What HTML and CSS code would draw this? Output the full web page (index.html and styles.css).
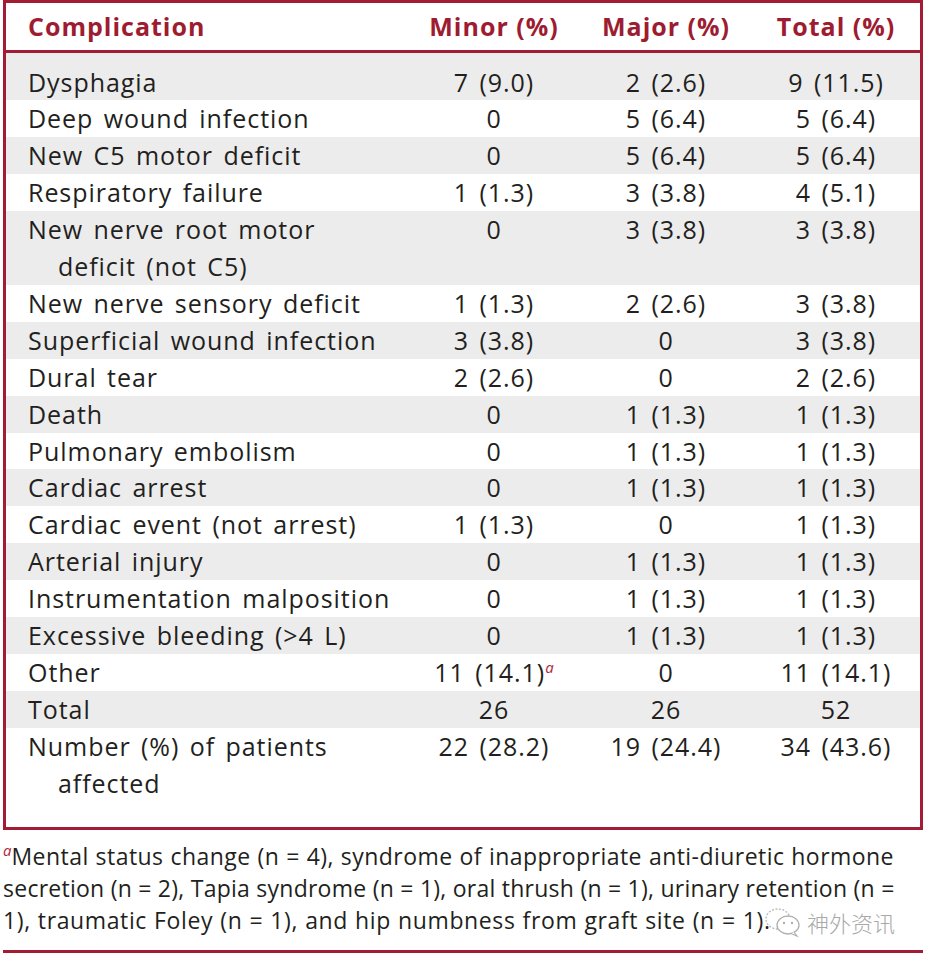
FILE: index.html
```html
<!DOCTYPE html>
<html>
<head>
<meta charset="utf-8">
<link rel="stylesheet" href="styles.css">
</head>
<body>
<div class="page">
  <div class="box">
    <div class="row head">
      <div class="c1">Complication</div>
      <div class="cn">Minor (%)</div>
      <div class="cn">Major (%)</div>
      <div class="cn">Total (%)</div>
    </div>
    <div class="body">
      <div class="row g first"><div class="c1">Dysphagia</div><div class="cn">7 (9.0)</div><div class="cn">2 (2.6)</div><div class="cn">9 (11.5)</div></div>
      <div class="row"><div class="c1">Deep wound infection</div><div class="cn">0</div><div class="cn">5 (6.4)</div><div class="cn">5 (6.4)</div></div>
      <div class="row g"><div class="c1">New C5 motor deficit</div><div class="cn">0</div><div class="cn">5 (6.4)</div><div class="cn">5 (6.4)</div></div>
      <div class="row"><div class="c1">Respiratory failure</div><div class="cn">1 (1.3)</div><div class="cn">3 (3.8)</div><div class="cn">4 (5.1)</div></div>
      <div class="row g"><div class="c1 hang">New nerve root motor<br>deficit (not C5)</div><div class="cn">0</div><div class="cn">3 (3.8)</div><div class="cn">3 (3.8)</div></div>
      <div class="row"><div class="c1">New nerve sensory deficit</div><div class="cn">1 (1.3)</div><div class="cn">2 (2.6)</div><div class="cn">3 (3.8)</div></div>
      <div class="row g"><div class="c1">Superficial wound infection</div><div class="cn">3 (3.8)</div><div class="cn">0</div><div class="cn">3 (3.8)</div></div>
      <div class="row"><div class="c1">Dural tear</div><div class="cn">2 (2.6)</div><div class="cn">0</div><div class="cn">2 (2.6)</div></div>
      <div class="row g"><div class="c1">Death</div><div class="cn">0</div><div class="cn">1 (1.3)</div><div class="cn">1 (1.3)</div></div>
      <div class="row"><div class="c1">Pulmonary embolism</div><div class="cn">0</div><div class="cn">1 (1.3)</div><div class="cn">1 (1.3)</div></div>
      <div class="row g"><div class="c1">Cardiac arrest</div><div class="cn">0</div><div class="cn">1 (1.3)</div><div class="cn">1 (1.3)</div></div>
      <div class="row"><div class="c1">Cardiac event (not arrest)</div><div class="cn">1 (1.3)</div><div class="cn">0</div><div class="cn">1 (1.3)</div></div>
      <div class="row g"><div class="c1">Arterial injury</div><div class="cn">0</div><div class="cn">1 (1.3)</div><div class="cn">1 (1.3)</div></div>
      <div class="row"><div class="c1">Instrumentation malposition</div><div class="cn">0</div><div class="cn">1 (1.3)</div><div class="cn">1 (1.3)</div></div>
      <div class="row g"><div class="c1">Excessive bleeding (&gt;4 L)</div><div class="cn">0</div><div class="cn">1 (1.3)</div><div class="cn">1 (1.3)</div></div>
      <div class="row"><div class="c1">Other</div><div class="cn">11 (14.1)<sup class="fa">a</sup></div><div class="cn">0</div><div class="cn">11 (14.1)</div></div>
      <div class="row g"><div class="c1">Total</div><div class="cn">26</div><div class="cn">26</div><div class="cn">52</div></div>
      <div class="row"><div class="c1 hang">Number (%) of patients<br>affected</div><div class="cn">22 (28.2)</div><div class="cn">19 (24.4)</div><div class="cn">34 (43.6)</div></div>
    </div>
  </div>
  <div class="foot">
    <span class="fl l1"><sup class="fa">a</sup>Mental status change (n = 4), syndrome of inappropriate anti-diuretic hormone</span>
    <span class="fl l2">secretion (n = 2), Tapia syndrome (n = 1), oral thrush (n = 1), urinary retention (n =</span>
    <span class="fl l3">1), traumatic Foley (n = 1), and hip numbness from graft site (n = 1).</span>
    <div class="wm">
      <svg class="wm-logo" width="40" height="32" viewBox="0 0 40 32">
        <ellipse cx="15" cy="13" rx="12" ry="10" fill="none" stroke="#b8b8b8" stroke-width="1.3" stroke-dasharray="2 1.5"/>
        <ellipse cx="25" cy="19" rx="11" ry="9" fill="#fff" stroke="#b0b0b0" stroke-width="1.3"/>
        <path d="M31 26 L34 30 L28 27.5" fill="#fff" stroke="#b0b0b0" stroke-width="1.2"/>
        <circle cx="21" cy="17" r="1.2" fill="#b0b0b0"/>
        <circle cx="29" cy="17" r="1.2" fill="#b0b0b0"/>
      </svg>
      <span class="wm-text">神外资讯</span>
    </div>
  </div>
  <div class="rule"></div>
</div>
</body>
</html>
```

FILE: styles.css
```css
html, body {
  margin: 0;
  padding: 0;
  background: #ffffff;
}
.page {
  width: 927px;
  padding-left: 3px;
  box-sizing: border-box;
  font-family: "Open Sans", "Noto Sans", sans-serif;
  color: #231f20;
}
.box {
  width: 920px;
  height: 830px;
  box-sizing: border-box;
  border: 3px solid #a21d33;
}
.row {
  display: grid;
  grid-template-columns: 402px 172px 172px 168px;
  font-size: 25px;
  line-height: 36.9px;
  letter-spacing: 0.95px;
  word-spacing: 3px;
}
.row.head {
  height: 47px;
  align-items: center;
  border-bottom: 3px solid #a21d33;
  color: #9d1c31;
  font-weight: 700;
  letter-spacing: 1px;
  word-spacing: 0;
}
.row.g {
  background: #ececec;
}
.row.first {
  padding-top: 10.5px;
}
.c1 {
  padding-left: 22px;
}
.c1.hang {
  padding-left: 52px;
  text-indent: -30px;
}
.cn {
  text-align: center;
}
.fa {
  color: #b0283c;
  font-style: italic;
  font-size: 15px;
  line-height: 0;
  vertical-align: 9px;
  letter-spacing: 0;
}
.foot {
  position: relative;
  margin-top: 10px;
  font-size: 23px;
  line-height: 32px;
  word-spacing: 0.5px;
  width: 920px;
}
.fl {
  display: block;
  white-space: nowrap;
}
.fl.l1 {
  letter-spacing: 0.45px;
}
.fl.l2 {
  letter-spacing: 0.25px;
  word-spacing: 0;
}
.fl.l3 {
  letter-spacing: 0.62px;
}
.wm {
  position: absolute;
  left: 760px;
  top: 66px;
  display: flex;
  align-items: center;
  gap: 4px;
}
.wm-text {
  font-family: "Noto Sans CJK SC", sans-serif;
  font-size: 22px;
  font-weight: 300;
  color: #a8a8a8;
  letter-spacing: 0;
  word-spacing: 0;
}
.rule {
  margin-top: 14px;
  width: 920px;
  height: 3px;
  background: #a21d33;
}
```
